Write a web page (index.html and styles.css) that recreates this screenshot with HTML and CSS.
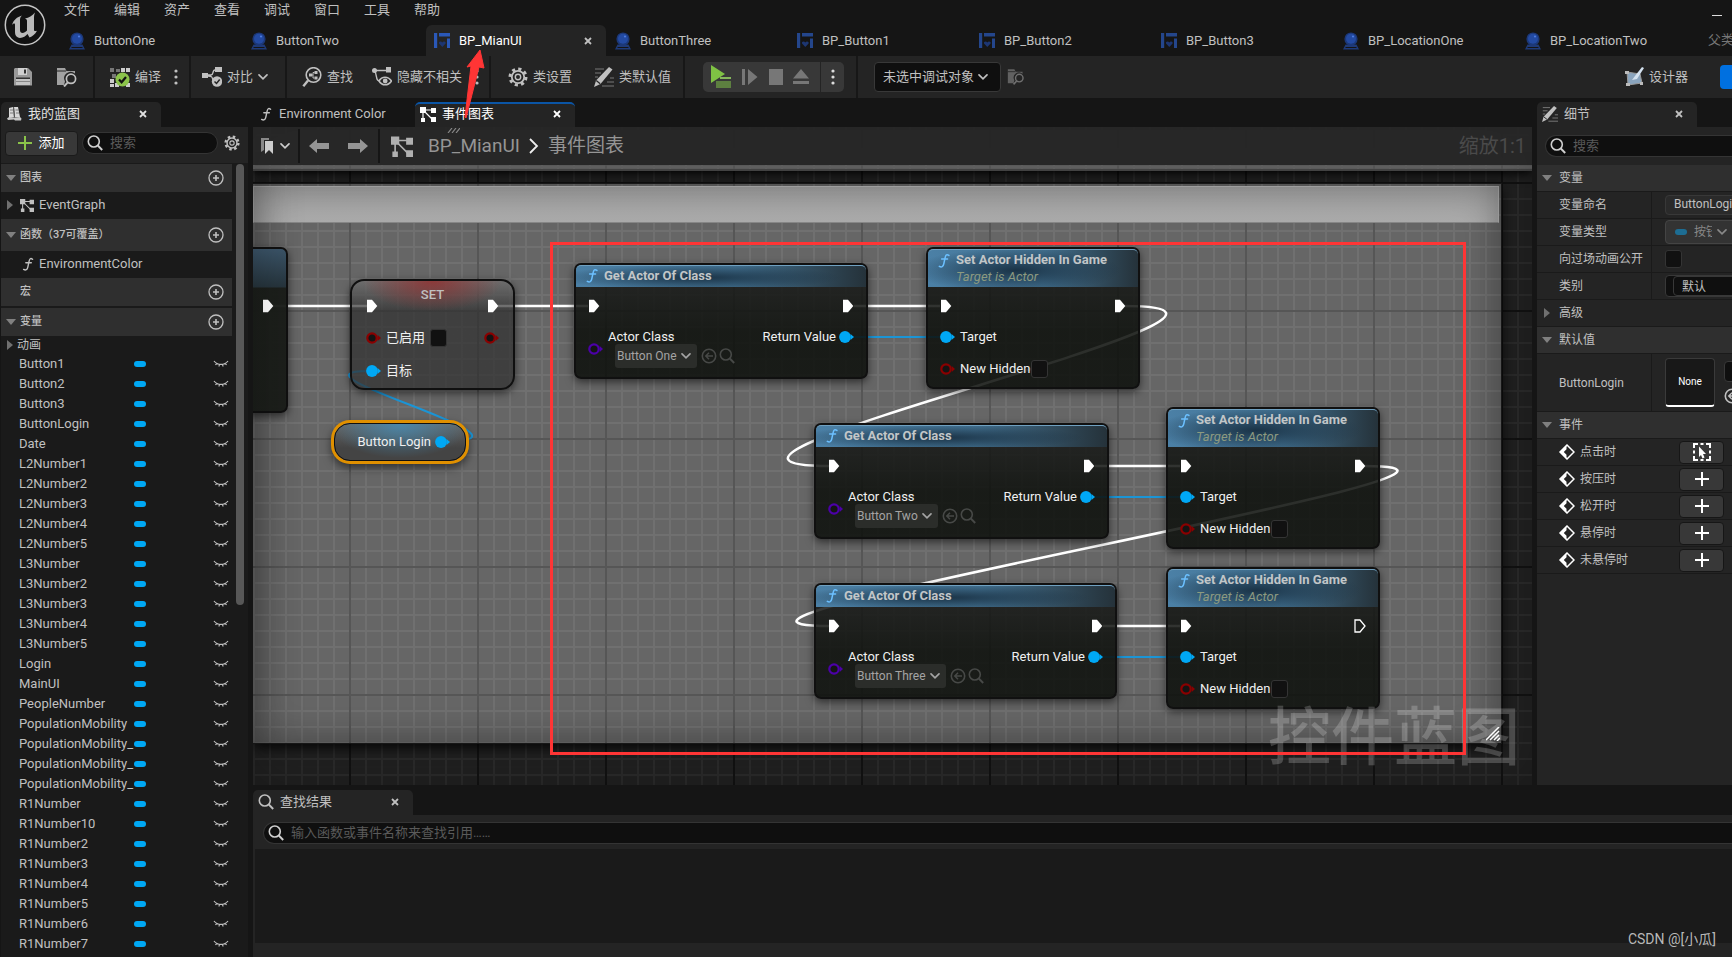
FILE: index.html
```html
<!DOCTYPE html>
<html lang="zh-CN">
<head>
<meta charset="utf-8">
<title>BP_MianUI</title>
<link rel="stylesheet" href="styles.css">
</head>
<body>
<svg class="defs" aria-hidden="true">
  <symbol id="actor" viewBox="0 0 16 18"><path d="M2.500 12.500h11L16 17.500H0z" fill="#1f3a78"/><path d="M2.500 15.500h11" stroke="#151515"/><circle cx="8" cy="7" r="6.600" fill="#1c3878"/><circle cx="8" cy="6.800" r="5" fill="#234aa2"/><circle cx="10" cy="4.500" r="1.100" fill="#4d7be0"/></symbol>
  <symbol id="widget" viewBox="0 0 16 16"><path d="M0 0h3.200v15H0zM5 0h11v3.500H5zM13 5.500h3V15h-3z" fill="currentColor"/><path d="M8.300 14 5 10.600C4.300 8.500 7 7.600 8.300 9.400c1.300-1.800 4-.9 3.300 1.200z" fill="#1d3672"/></symbol>
  <symbol id="close" viewBox="0 0 8 8"><path d="M1 1l6 6M7 1L1 7" stroke="currentColor" stroke-width="1.800"/></symbol>
  <symbol id="chev" viewBox="0 0 10 8"><path d="M1 1.800l4 4 4-4" fill="none" stroke="currentColor" stroke-width="1.700" stroke-linecap="round"/></symbol>
  <symbol id="dots" viewBox="0 0 4 16"><circle cx="2" cy="2" r="1.600" fill="currentColor"/><circle cx="2" cy="8" r="1.600" fill="currentColor"/><circle cx="2" cy="14" r="1.600" fill="currentColor"/></symbol>
  <symbol id="search" viewBox="0 0 16 16"><circle cx="6.800" cy="6.500" r="5.500" fill="none" stroke="currentColor" stroke-width="1.600"/><path d="M10.800 10.500l4.400 4.500" stroke="currentColor" stroke-width="1.900"/></symbol>
  <symbol id="save" viewBox="0 0 18 18"><path d="M1 0h13l4 4v13.500H0V1z" fill="#9a9a9a"/><path d="M4 0h9v7H4z" fill="#d0d0d0"/><path d="M10 1.500h2v4h-2z" fill="#333"/><path d="M2 9.500h14v1.500H2z" fill="#333"/><path d="M2 11h14v6H2z" fill="#c4c4c4"/><path d="M2 13.500h14" stroke="#888"/></symbol>
  <symbol id="browse" viewBox="0 0 22 19"><path d="M1 0h8l1.500 3H19v2.500A6.500 6.500 0 0 0 9 13.500L8 17H1z" fill="currentColor" opacity=".8"/><path d="M1 3h9" stroke="#242424"/><circle cx="15" cy="10.800" r="4.600" fill="none" stroke="currentColor" stroke-width="1.700"/><path d="M11.800 14.300L8 18.500" stroke="currentColor" stroke-width="2"/></symbol>
  <symbol id="compile" viewBox="0 0 20 20"><path d="M0 1h4v4H0zM2 7h4v4H2zM6 2h4v3H6z" fill="#777"/><path d="M11 1h4v4h-4zM16 1h4v4h-4zM0 12h4v4H0zM0 17h4v3H0zM5 16h4v4H5zM16 16h4v4h-4z" fill="#ccc"/><circle cx="12.500" cy="12.500" r="7" fill="#8bc34a"/><path d="M9 12.500l2.600 2.800L16 10" fill="none" stroke="#111" stroke-width="2.200"/></symbol>
  <symbol id="diff" viewBox="0 0 20 20"><path d="M0 6h6v5H0zM13 0h7v5h-7z" fill="currentColor"/><path d="M6 8h3c3 0 1-5 4-5M6 9c5 0 4 2 5 4" fill="none" stroke="currentColor" stroke-width="1.300"/><circle cx="15" cy="14.500" r="5.200" fill="currentColor"/><path d="M12.500 14.500l2 2 3.200-4" fill="none" stroke="#242424" stroke-width="1.500"/></symbol>
  <symbol id="find" viewBox="0 0 19 20"><circle cx="11" cy="8" r="7.300" fill="none" stroke="currentColor" stroke-width="1.600"/><path d="M5.500 13.500L.8 19.200" stroke="currentColor" stroke-width="2.400"/><path d="M6.500 6.500h3v3h-3zM12 4h3v3h-3zM12 9.500h3v3h-3z" fill="currentColor"/><path d="M9 8h1.500M12 5.500h-1.500V11H12" fill="none" stroke="currentColor"/></symbol>
  <symbol id="hide" viewBox="0 0 20 20"><circle cx="2.500" cy="3.500" r="2.500" fill="currentColor"/><path d="M14 0h5v5.500h-5z" fill="currentColor"/><path d="M4 3.500h10M3 4.500c2 4 1 10 4.500 9" fill="none" stroke="currentColor" stroke-width="1.400"/><path d="M7 14c3-5 9-5 12.500 0-3.500 5-9.500 5-12.500 0z" fill="none" stroke="currentColor" stroke-width="1.600"/><circle cx="13.200" cy="14" r="2.400" fill="currentColor"/></symbol>
  <symbol id="gear" viewBox="0 0 20 20"><circle cx="10" cy="10" r="8" fill="none" stroke="currentColor" stroke-width="3" stroke-dasharray="3.140 3.140"/><circle cx="10" cy="10" r="6.200" fill="none" stroke="currentColor" stroke-width="1.800"/><circle cx="10" cy="10" r="2.700" fill="none" stroke="currentColor" stroke-width="1.400"/></symbol>
  <symbol id="pencil" viewBox="0 0 20 20"><path d="M15 0l3.500 2.500L6.500 17 0 20l2-6.500z" fill="currentColor"/><path d="M2.200 13.500l4 3.200" stroke="#242424" stroke-width="1.200"/><path d="M1 2h9M1 6h6M1 10h3M16 11h4M13 15h7M8 19h12" stroke="currentColor" stroke-width="1.200" opacity=".55"/></symbol>
  <symbol id="graph" viewBox="0 0 16 16"><path d="M0 1h6v6H0zM11 2h5v5h-5zM1 12h4v4H1zM11 11h5v5h-5z" fill="currentColor"/><path d="M5 4h7M3 6v7M5 6l7 7" stroke="currentColor" stroke-width="1.200" fill="none"/></symbol>
  <symbol id="func" viewBox="0 0 12 16"><path d="M11.200 2.600C9 .8 7.800 2 7.200 5l-1.400 6.500C5.200 14.600 3.400 15.600 1 14.200M3.500 6.500h6.300" fill="none" stroke="currentColor" stroke-width="1.600" stroke-linecap="round"/></symbol>
  <symbol id="plusc" viewBox="0 0 16 16"><circle cx="8" cy="8" r="7" fill="none" stroke="currentColor" stroke-width="1.300"/><path d="M8 5v6M5 8h6" stroke="currentColor" stroke-width="1.600"/></symbol>
  <symbol id="plus" viewBox="0 0 14 14"><path d="M7 0v14M0 7h14" stroke="currentColor" stroke-width="2"/></symbol>
  <symbol id="eye" viewBox="0 0 16 8"><path d="M1 1c3.500 4.500 10.500 4.500 14 0M2.500 5l1.200-1.600M6 6.500l.4-2M10 6.500l-.4-2M13.500 5l-1.200-1.600" fill="none" stroke="currentColor" stroke-width="1.200"/></symbol>
  <symbol id="down" viewBox="0 0 10 8"><path d="M0 1h10L5 7z" fill="currentColor"/></symbol>
  <symbol id="right" viewBox="0 0 8 12"><path d="M1 1l6 5-6 5z" fill="currentColor"/></symbol>
  <symbol id="book" viewBox="0 0 16 14"><path d="M3 1l4-1 1 10-5 1zM8 0h4l2 10-5 0z" fill="#d8d8d8"/><path d="M1 11.500L3 10l5 .5 6-.5 1.500 1.500-.5 2H9l-1-1-6 .5z" fill="#c8c8c8"/><path d="M7.500 0l1 11M4 3h3M4 6h3M9.500 3h3M10 6h3" stroke="#666" stroke-width=".8"/></symbol>
  <symbol id="exec" viewBox="0 0 12 14"><path d="M1 .7h5l5.300 6.300L6 13.300H1z" fill="#fff"/></symbol>
  <symbol id="execo" viewBox="0 0 12 14"><path d="M1 1h5l5 6-5 6H1z" fill="none" stroke="#fff" stroke-width="1.300"/></symbol>
  <symbol id="pin" viewBox="0 0 15 12"><circle cx="6" cy="6" r="5.900" fill="#00a8f5"/><path d="M11.500 3L15 6l-3.500 3z" fill="#00a8f5"/></symbol>
  <symbol id="pino" viewBox="0 0 15 12"><circle cx="6" cy="6" r="4.700" fill="#141414" stroke="currentColor" stroke-width="2.200"/><path d="M11.700 3L15 6l-3.300 3z" fill="currentColor"/></symbol>
  <symbol id="back" viewBox="0 0 16 16"><circle cx="8" cy="8" r="6.700" fill="none" stroke="currentColor" stroke-width="1.600"/><path d="M12 8H5M8 4.800L4.800 8 8 11.200" fill="none" stroke="currentColor" stroke-width="1.500"/></symbol>
  <symbol id="arrow" viewBox="0 0 20 14"><path d="M8 0v4h12v6H8v4L0 7z" fill="currentColor"/></symbol>
  <symbol id="bind" viewBox="0 0 16 16"><path d="M8 1l7 7-7 7-7-7z" fill="none" stroke="#fff" stroke-width="1.500"/><path d="M7.500 1v4.300L4.800 8l2.700 2.700V15L.5 8z" fill="#fff"/></symbol>
  <symbol id="goto" viewBox="0 0 18 18"><path d="M1 5V1h4M13 1h4v4M17 13v4h-4M5 17H1v-4M7.500 1h3M7.500 17h3M1 7.500v3M17 7.500v3" fill="none" stroke="#fff" stroke-width="2"/><path d="M6 3.500l7 7.500h-3l1.500 3.500-2 1L8 12l-2 2z" fill="#fff"/></symbol>
</svg>

<header class="top">
  <svg class="logo" viewBox="0 0 42 42" aria-label="Unreal Engine"><circle cx="21" cy="21" r="19.700" fill="#111" stroke="#c4c4c4" stroke-width="1.500"/><path d="M8 21c1.500-5 5-8 10-9.500-1.500 1.500-2 2.500-2 4.500v10c0 2 1 3 2.500 3s3-1 4.500-2.500V17c0-1.500-.5-2-2-2.500 4-.8 7-2.500 10-6-.8 2-1 3.500-1 6v11c0 1.500.8 2 3 1.200C31 30.500 28.500 32 25.500 33.500L23.500 30c-2 2-4 3.800-7.500 4-3.500-.5-5-2.500-5-6.500v-6.500c0-1.800-1-2-3 0z" fill="#b9b9b9"/></svg>
  <div class="top-main">
    <nav class="menu"><button>文件</button><button>编辑</button><button>资产</button><button>查看</button><button>调试</button><button>窗口</button><button>工具</button><button>帮助</button></nav>
    <div class="tabs">
      <button class="tab"><svg class="i16"><use href="#actor"/></svg>ButtonOne</button>
      <button class="tab"><svg class="i16"><use href="#actor"/></svg>ButtonTwo</button>
      <button class="tab on"><svg class="i16 wid"><use href="#widget"/></svg>BP_MianUI<svg class="x"><use href="#close"/></svg></button>
      <button class="tab"><svg class="i16"><use href="#actor"/></svg>ButtonThree</button>
      <button class="tab"><svg class="i16 wid"><use href="#widget"/></svg>BP_Button1</button>
      <button class="tab"><svg class="i16 wid"><use href="#widget"/></svg>BP_Button2</button>
      <button class="tab"><svg class="i16 wid"><use href="#widget"/></svg>BP_Button3</button>
      <button class="tab"><svg class="i16"><use href="#actor"/></svg>BP_LocationOne</button>
      <button class="tab"><svg class="i16"><use href="#actor"/></svg>BP_LocationTwo</button>
      <span class="parent">父类</span>
    </div>
  </div>
  <button class="minimize" aria-label="最小化"></button>
</header>

<div class="toolbar">
  <div class="group g-file"><button aria-label="保存"><svg class="i18"><use href="#save"/></svg></button><button aria-label="浏览"><svg class="i22"><use href="#browse"/></svg></button></div>
  <div class="group g-compile"><button><svg class="i20"><use href="#compile"/></svg>编译</button><button aria-label="编译选项"><svg class="dots"><use href="#dots"/></svg></button></div>
  <div class="group g-diff"><button><svg class="i20"><use href="#diff"/></svg>对比<svg class="chev"><use href="#chev"/></svg></button></div>
  <div class="group g-find"><button><svg class="i20"><use href="#find"/></svg>查找</button><button class="hide"><svg class="i20"><use href="#hide"/></svg>隐藏不相关</button><button aria-label="隐藏选项"><svg class="dots"><use href="#dots"/></svg></button></div>
  <div class="group g-class"><button><svg class="i20"><use href="#gear"/></svg>类设置</button><button><svg class="i20"><use href="#pencil"/></svg>类默认值</button></div>
  <div class="group g-play">
    <div class="play">
      <button aria-label="播放"><svg width="20" height="24" viewBox="0 0 20 24"><path d="M0 0l14 9-14 9z" fill="#7fc244"/><path d="M5 16h15v7H5z" fill="#5d8040"/><path d="M9 12h11v2H9z" fill="#86b85c"/></svg></button>
      <button aria-label="步进"><svg width="16" height="16" viewBox="0 0 16 16"><path d="M0 0h3v16H0zM6 0l9.500 8L6 16z" fill="#777"/></svg></button>
      <button aria-label="停止"><svg width="14" height="16" viewBox="0 0 14 16"><path d="M0 0h14v16H0z" fill="#777"/></svg></button>
      <button aria-label="弹出"><svg width="16" height="16" viewBox="0 0 16 16"><path d="M8 0l8 9.500H0zM0 12h16v3H0z" fill="#777"/></svg></button>
      <button class="more" aria-label="播放选项"><svg class="dots"><use href="#dots"/></svg></button>
    </div>
  </div>
  <div class="debug"><div class="sel"><select aria-label="调试对象"><option>未选中调试对象</option></select><svg class="chev"><use href="#chev"/></svg></div><button class="dim" aria-label="定位"><svg class="i18"><use href="#browse"/></svg></button></div>
  <div class="mode"><button><svg width="19" height="20" viewBox="0 0 19 20"><path d="M2 5l13 2 2 9-14 2z" fill="#8aa4bd" stroke="#999"/><path d="M17 0l2 1-7 11-5 1 3-4z" fill="#d4e2f0"/><path d="M0 4h4v3H0zM1 16h4v3H1zM15 15h3v3h-3z" fill="#bbb"/></svg>设计器</button><button class="blue" aria-label="图表"></button></div>
</div>

<div class="work">
  <aside class="left">
    <div class="docktabs"><div class="dock on"><svg class="i16"><use href="#book"/></svg><span>我的蓝图</span><button aria-label="关闭"><svg class="x"><use href="#close"/></svg></button></div></div>
    <div class="ltools"><button class="add"><svg class="i14"><use href="#plus"/></svg>添加</button><label class="search"><svg class="i16"><use href="#search"/></svg><input aria-label="搜索" placeholder="搜索"></label><button aria-label="设置"><svg class="i16"><use href="#gear"/></svg></button></div>
    <div class="tree">
      <div class="list">
        <h3><svg class="tri"><use href="#down"/></svg>图表<button aria-label="添加图表"><svg class="i16"><use href="#plusc"/></svg></button></h3>
        <div class="item"><svg class="tr"><use href="#right"/></svg><svg class="i14"><use href="#graph"/></svg>EventGraph</div>
        <h3 class="tall"><svg class="tri"><use href="#down"/></svg>函数（37可覆盖）<button aria-label="添加函数"><svg class="i16"><use href="#plusc"/></svg></button></h3>
        <div class="item fn"><svg class="i12"><use href="#func"/></svg>EnvironmentColor</div>
        <h3><span class="tri"></span>宏<button aria-label="添加宏"><svg class="i16"><use href="#plusc"/></svg></button></h3>
        <h3 class="vars"><svg class="tri"><use href="#down"/></svg>变量<button aria-label="添加变量"><svg class="i16"><use href="#plusc"/></svg></button></h3>
        <div class="item anim"><svg class="tr"><use href="#right"/></svg>动画</div>
        <ul>
          <li><span>Button1</span><i></i><svg><use href="#eye"/></svg></li>
          <li><span>Button2</span><i></i><svg><use href="#eye"/></svg></li>
          <li><span>Button3</span><i></i><svg><use href="#eye"/></svg></li>
          <li><span>ButtonLogin</span><i></i><svg><use href="#eye"/></svg></li>
          <li><span>Date</span><i></i><svg><use href="#eye"/></svg></li>
          <li><span>L2Number1</span><i></i><svg><use href="#eye"/></svg></li>
          <li><span>L2Number2</span><i></i><svg><use href="#eye"/></svg></li>
          <li><span>L2Number3</span><i></i><svg><use href="#eye"/></svg></li>
          <li><span>L2Number4</span><i></i><svg><use href="#eye"/></svg></li>
          <li><span>L2Number5</span><i></i><svg><use href="#eye"/></svg></li>
          <li><span>L3Number</span><i></i><svg><use href="#eye"/></svg></li>
          <li><span>L3Number2</span><i></i><svg><use href="#eye"/></svg></li>
          <li><span>L3Number3</span><i></i><svg><use href="#eye"/></svg></li>
          <li><span>L3Number4</span><i></i><svg><use href="#eye"/></svg></li>
          <li><span>L3Number5</span><i></i><svg><use href="#eye"/></svg></li>
          <li><span>Login</span><i></i><svg><use href="#eye"/></svg></li>
          <li><span>MainUI</span><i></i><svg><use href="#eye"/></svg></li>
          <li><span>PeopleNumber</span><i></i><svg><use href="#eye"/></svg></li>
          <li><span>PopulationMobility</span><i></i><svg><use href="#eye"/></svg></li>
          <li><span>PopulationMobility_</span><i></i><svg><use href="#eye"/></svg></li>
          <li><span>PopulationMobility_</span><i></i><svg><use href="#eye"/></svg></li>
          <li><span>PopulationMobility_</span><i></i><svg><use href="#eye"/></svg></li>
          <li><span>R1Number</span><i></i><svg><use href="#eye"/></svg></li>
          <li><span>R1Number10</span><i></i><svg><use href="#eye"/></svg></li>
          <li><span>R1Number2</span><i></i><svg><use href="#eye"/></svg></li>
          <li><span>R1Number3</span><i></i><svg><use href="#eye"/></svg></li>
          <li><span>R1Number4</span><i></i><svg><use href="#eye"/></svg></li>
          <li><span>R1Number5</span><i></i><svg><use href="#eye"/></svg></li>
          <li><span>R1Number6</span><i></i><svg><use href="#eye"/></svg></li>
          <li><span>R1Number7</span><i></i><svg><use href="#eye"/></svg></li>
        </ul>
      </div>
      <div class="bar"></div>
    </div>
  </aside>

  <div class="center">
    <div class="upper">
      <main class="graphcol">
        <div class="docktabs">
          <div class="dock env"><svg class="i14"><use href="#func"/></svg><span>Environment Color</span></div>
          <div class="dock on cur"><svg class="i16"><use href="#graph"/></svg><span>事件图表</span><button aria-label="关闭"><svg class="x"><use href="#close"/></svg></button></div>
        </div>
        <div class="canvas">
          <div class="upbox"></div>
          <div class="comment"><div class="chead"></div></div>
          <svg class="wires" aria-hidden="true"><g transform="translate(-253 -127)" fill="none">
            <g stroke="#fff" stroke-width="2.600">
              <path d="M270 306H368M498 306H588M854 306H940M1095 466H1180M1103 626H1180"/>
              <path d="M1124 306C1346 306 608 466 830 466"/>
              <path d="M1364 466C1588 466 606 626 830 626"/>
            </g>
            <g stroke="#1b95d6" stroke-width="2">
              <path d="M850 337H940M1092 497H1180M1100 657H1180"/>
              <path d="M448 441C553 441 276 371 368 371"/>
            </g>
          </g></svg>

          <div class="node stub"><svg class="exec"><use href="#exec"/></svg></div>

          <div class="node set">
            <div class="ex"><svg class="exec"><use href="#exec"/></svg><b>SET</b><svg class="exec"><use href="#exec"/></svg></div>
            <div class="row bool"><svg class="pin red"><use href="#pino"/></svg><label for="c0">已启用</label><input type="checkbox" id="c0"><svg class="pin red end"><use href="#pino"/></svg></div>
            <div class="row"><svg class="pin"><use href="#pin"/></svg>目标</div>
          </div>

          <div class="node var">Button Login<svg class="pin"><use href="#pin"/></svg></div>

          <div class="node fnode n1">
            <div class="head"><svg><use href="#func"/></svg><b>Get Actor Of Class</b></div>
            <div class="ex"><svg class="exec"><use href="#exec"/></svg><svg class="exec"><use href="#exec"/></svg></div>
            <div class="gbody"><svg class="pin purple"><use href="#pino"/></svg><div class="cls"><label for="s1">Actor Class</label><div class="pick"><div class="sel"><select id="s1"><option>Button One</option></select><svg class="chev"><use href="#chev"/></svg></div><svg class="i16"><use href="#back"/></svg><svg class="i16"><use href="#search"/></svg></div></div><div class="ret">Return Value<svg class="pin"><use href="#pin"/></svg></div></div>
          </div>
          <div class="node fnode n2">
            <div class="head two"><svg><use href="#func"/></svg><b>Set Actor Hidden In Game</b><em>Target is Actor</em></div>
            <div class="ex"><svg class="exec"><use href="#exec"/></svg><svg class="exec"><use href="#exec"/></svg></div>
            <div class="row"><svg class="pin"><use href="#pin"/></svg>Target</div>
            <div class="row"><svg class="pin red"><use href="#pino"/></svg><label for="c1">New Hidden</label><input type="checkbox" id="c1"></div>
          </div>
          <div class="node fnode n3">
            <div class="head"><svg><use href="#func"/></svg><b>Get Actor Of Class</b></div>
            <div class="ex"><svg class="exec"><use href="#exec"/></svg><svg class="exec"><use href="#exec"/></svg></div>
            <div class="gbody"><svg class="pin purple"><use href="#pino"/></svg><div class="cls"><label for="s2">Actor Class</label><div class="pick"><div class="sel"><select id="s2"><option>Button Two</option></select><svg class="chev"><use href="#chev"/></svg></div><svg class="i16"><use href="#back"/></svg><svg class="i16"><use href="#search"/></svg></div></div><div class="ret">Return Value<svg class="pin"><use href="#pin"/></svg></div></div>
          </div>
          <div class="node fnode n4">
            <div class="head two"><svg><use href="#func"/></svg><b>Set Actor Hidden In Game</b><em>Target is Actor</em></div>
            <div class="ex"><svg class="exec"><use href="#exec"/></svg><svg class="exec"><use href="#exec"/></svg></div>
            <div class="row"><svg class="pin"><use href="#pin"/></svg>Target</div>
            <div class="row"><svg class="pin red"><use href="#pino"/></svg><label for="c2">New Hidden</label><input type="checkbox" id="c2"></div>
          </div>
          <div class="node fnode n5">
            <div class="head"><svg><use href="#func"/></svg><b>Get Actor Of Class</b></div>
            <div class="ex"><svg class="exec"><use href="#exec"/></svg><svg class="exec"><use href="#exec"/></svg></div>
            <div class="gbody"><svg class="pin purple"><use href="#pino"/></svg><div class="cls"><label for="s3">Actor Class</label><div class="pick"><div class="sel"><select id="s3"><option>Button Three</option></select><svg class="chev"><use href="#chev"/></svg></div><svg class="i16"><use href="#back"/></svg><svg class="i16"><use href="#search"/></svg></div></div><div class="ret">Return Value<svg class="pin"><use href="#pin"/></svg></div></div>
          </div>
          <div class="node fnode n6">
            <div class="head two"><svg><use href="#func"/></svg><b>Set Actor Hidden In Game</b><em>Target is Actor</em></div>
            <div class="ex"><svg class="exec"><use href="#exec"/></svg><svg class="exec"><use href="#execo"/></svg></div>
            <div class="row"><svg class="pin"><use href="#pin"/></svg>Target</div>
            <div class="row"><svg class="pin red"><use href="#pino"/></svg><label for="c3">New Hidden</label><input type="checkbox" id="c3"></div>
          </div>

          <div class="vignette"></div>
          <div class="kind">控件蓝图</div>
          <svg class="grip" viewBox="0 0 14 14"><path d="M0 13L13 0M4 13l9-9M8 13l5-5M11 14l3-3" stroke="#fff" stroke-width="1.500"/></svg>
          <div class="crumbs">
            <button class="bm" aria-label="书签"><svg width="12" height="16" viewBox="0 0 12 16"><path d="M0 0h8v2H3v10l-3 2z" fill="#888"/><path d="M4 3h8v13l-4-4-4 4z" fill="#ccc"/></svg><svg class="chev"><use href="#chev"/></svg></button>
            <div class="nav"><button aria-label="后退"><svg width="20" height="14"><use href="#arrow"/></svg></button><button class="fwd" aria-label="前进"><svg width="20" height="14"><use href="#arrow"/></svg></button></div>
            <svg class="big"><use href="#graph"/></svg><a href="#">BP_MianUI</a><svg class="gt" width="10" height="16" viewBox="0 0 10 16"><path d="M1 1l7 7-7 7" fill="none" stroke="#eee" stroke-width="1.800"/></svg><a href="#">事件图表</a>
            <span class="zoom">缩放1:1</span>
            <svg class="hatch" viewBox="0 0 13 5"><path d="M1 5l4-5M5 5l4-5M9 5l4-5" stroke="#888" stroke-width="1.200"/></svg>
          </div>
        </div>
      </main>

      <aside class="right">
        <div class="docktabs"><div class="dock on det"><svg class="i16"><use href="#pencil"/></svg><span>细节</span><button aria-label="关闭"><svg class="x"><use href="#close"/></svg></button></div></div>
        <div class="details">
          <label class="search"><svg class="i16"><use href="#search"/></svg><input aria-label="搜索细节" placeholder="搜索"></label>
          <h3><svg class="tri"><use href="#down"/></svg>变量</h3>
          <div class="prop"><label for="vn">变量命名</label><div><input id="vn" class="txt" value="ButtonLogin"></div></div>
          <div class="prop"><span>变量类型</span><div><button class="type"><i></i><span>按钮</span><svg class="chev"><use href="#chev"/></svg></button></div></div>
          <div class="prop"><label for="ex">向过场动画公开</label><div><input type="checkbox" id="ex"></div></div>
          <div class="prop"><label for="cat">类别</label><div><div class="combo"><input id="cat" value="默认"></div></div></div>
          <div class="adv"><svg class="tr"><use href="#right"/></svg>高级</div>
          <h3><svg class="tri"><use href="#down"/></svg>默认值</h3>
          <div class="prop def"><span>ButtonLogin</span><div><button class="thumb">None</button><div class="asset"><button class="abox" aria-label="选择资产"></button><svg class="i16"><use href="#back"/></svg></div></div></div>
          <h3><svg class="tri"><use href="#down"/></svg>事件</h3>
          <div class="event"><svg class="i16"><use href="#bind"/></svg>点击时<button aria-label="查看点击时"><svg class="i18"><use href="#goto"/></svg></button></div>
          <div class="event"><svg class="i16"><use href="#bind"/></svg>按压时<button aria-label="添加按压时"><svg class="i14"><use href="#plus"/></svg></button></div>
          <div class="event"><svg class="i16"><use href="#bind"/></svg>松开时<button aria-label="添加松开时"><svg class="i14"><use href="#plus"/></svg></button></div>
          <div class="event"><svg class="i16"><use href="#bind"/></svg>悬停时<button aria-label="添加悬停时"><svg class="i14"><use href="#plus"/></svg></button></div>
          <div class="event"><svg class="i16"><use href="#bind"/></svg>未悬停时<button aria-label="添加未悬停时"><svg class="i14"><use href="#plus"/></svg></button></div>
        </div>
      </aside>
    </div>

    <section class="results">
      <div class="docktabs"><div class="dock on"><svg class="i16"><use href="#search"/></svg><span>查找结果</span><button aria-label="关闭"><svg class="x"><use href="#close"/></svg></button></div></div>
      <div class="rbody"><label class="search"><svg class="i16"><use href="#search"/></svg><input aria-label="查找" placeholder="输入函数或事件名称来查找引用……"></label><div class="rlist"></div></div>
    </section>
  </div>
</div>

<svg class="marks" aria-hidden="true"><rect x="551.500" y="243.500" width="913" height="510" fill="none" stroke="#ff3535" stroke-width="3"/><path d="M480 50l4 18-5-1-13 51-1-1 6-51-4 1z" fill="#ff3535" stroke="#ff3535"/></svg>
<div class="sign">CSDN @[小瓜]</div>
</body>
</html>
```

FILE: styles.css
```css
* { box-sizing: border-box; }
html, body { height: 100%; }
body {
  margin: 0; display: flex; flex-direction: column; overflow: hidden; position: relative;
  background: #151515; color: #c0c0c0;
  font: 13px/16px Roboto, "Noto Sans CJK SC", sans-serif;
}
button, input, select { font: inherit; color: inherit; background: none; border: 0; padding: 0; margin: 0; outline: 0; }
button { display: flex; align-items: center; white-space: nowrap; }
svg { display: block; flex: none; }
h3, ul { margin: 0; padding: 0; list-style: none; }
a { color: inherit; text-decoration: none; }
.defs { position: absolute; width: 0; height: 0; }
.i12 { width: 12px; height: 14px; }
.i14 { width: 14px; height: 14px; }
.i16 { width: 16px; height: 16px; }
.i18 { width: 18px; height: 18px; }
.i20 { width: 20px; height: 20px; }
.i22 { width: 22px; height: 19px; }
.x { width: 8px; height: 8px; }
.dots { width: 4px; height: 16px; }
.chev { width: 10px; height: 8px; }
.tri { width: 10px; height: 8px; color: #808080; }
.tr { width: 8px; height: 12px; color: #707070; }

/* title bar */
.top { display: flex; height: 56px; flex: none; position: relative; }
.logo { width: 42px; height: 42px; margin: 4px 16px 0 4px; }
.top-main { flex: 1; min-width: 0; display: flex; flex-direction: column; justify-content: space-between; }
.menu { display: flex; gap: 24px; padding: 2px 0 0 2px; }
.tabs { display: flex; gap: 2px; height: 31px; }
.tab { flex: 0 0 180px; gap: 9px; padding: 0 14px 0 7px; border-radius: 6px 6px 0 0; }
.tab.on { background: #242424; color: #fff; padding-left: 8px; }
.tab .i16 { height: 18px; }
.tab .wid { height: 16px; }
.tab .x { margin-left: auto; color: #c0c0c0; }
.wid { color: #24468c; }
.on .wid { color: #2a58b8; }
.parent { flex: none; padding: 7px 0 0 8px; color: #777; }
.minimize { position: absolute; right: 10px; top: 15px; width: 10px; height: 1px; background: #ddd; }

/* toolbar */
.toolbar { display: flex; height: 42px; flex: none; background: #242424; overflow: hidden; }
.group { display: flex; align-items: center; border-right: 2px solid #171717; flex: none; }
.group button, .mode button { gap: 5px; }
.g-file { padding: 0 15px 0 14px; gap: 24px; }
.g-compile { padding: 0 11px 0 15px; gap: 13px; }
.g-diff { padding: 0 17px 0 11px; }
.g-find { padding: 0 10px 0 15px; gap: 13px; }
.g-find .hide { margin-left: 6px; }
.g-class { padding: 0 12px 0 17px; gap: 22px; }
.g-play { padding: 0 12px 0 18px; }
.play { display: flex; align-items: center; justify-content: space-between; width: 141px; height: 30px; padding-left: 8px; background: #383838; border-radius: 5px; }
.play .more { width: 24px; height: 30px; justify-content: center; border-left: 1px solid #242424; color: #ddd; }
.debug { display: flex; align-items: center; gap: 6px; padding-left: 16px; }
.sel { display: grid; align-items: center; }
.sel > * { grid-area: 1 / 1; }
.sel .chev { justify-self: end; pointer-events: none; }
.sel select { appearance: none; }
.debug .sel { width: 127px; height: 30px; background: #0f0f0f; border: 1px solid #383838; border-radius: 4px; padding: 0 12px 0 8px; }
.dim { color: #707070; }
.mode { margin-left: auto; display: flex; align-items: center; gap: 32px; }
.mode .blue { width: 12px; height: 24px; background: #0070e0; border-radius: 4px 0 0 4px; }

/* docking */
.work { flex: 1; min-height: 0; display: flex; gap: 5px; }
.docktabs { height: 29px; flex: none; display: flex; align-items: flex-end; }
.dock { width: 160px; height: 25px; display: flex; align-items: center; padding: 0 14px 2px 5px; gap: 6px; border-radius: 5px 5px 0 0; white-space: nowrap; }
.dock.on { background: #242424; }
.dock button { margin-left: auto; }
.search { display: flex; align-items: center; gap: 7px; height: 22px; padding-left: 4px; background: #0f0f0f; border: 1px solid #343434; border-radius: 11px; color: #d0d0d0; }
.search input { flex: 1; width: 0; min-width: 0; }
.search input::placeholder { color: #5a5a5a; opacity: 1; }

/* my blueprint */
.left { width: 248px; flex: none; padding-left: 1px; display: flex; flex-direction: column; }
.left .dock { color: #e0e0e0; }
.ltools { height: 36px; flex: none; display: flex; align-items: center; background: #242424; padding: 0 8px 4px 4px; }
.add { width: 73px; height: 25px; margin-right: 4px; justify-content: center; gap: 6px; background: #383838; border: 1px solid #1a1a1a; border-radius: 4px; color: #fff; }
.add svg { color: #8bc34a; }
.ltools .search { width: 136px; margin-right: 6px; }
.tree { flex: 1; min-height: 0; display: flex; background: #1a1a1a; padding-top: 1px; }
.list { width: 231px; overflow: hidden; }
.bar { width: 8px; height: 441px; margin-left: 4px; background: #575757; border-radius: 4px; }
h3 { display: flex; align-items: center; height: 28px; padding: 0 8px 0 5px; gap: 4px; background: #2f2f2f; font-size: 11px; font-weight: 500; white-space: nowrap; }
h3 button { margin-left: auto; }
h3.tall { height: 32px; }
h3.vars { margin-top: 2px; }
.item { display: flex; align-items: center; height: 27px; padding: 0 0 2px 5px; gap: 5px; }
.item .tr { margin-right: 1px; }
.item.fn { padding-left: 21px; }
.item.anim { height: 18px; padding-bottom: 0; gap: 2px; font-size: 12px; }
.list li { display: grid; grid-template-columns: 114px 1fr 16px; align-items: center; height: 20px; padding: 0 3px 0 18px; gap: 0 1px; }
.list li span { white-space: nowrap; }
.list li i, .type i { width: 12px; height: 6px; border-radius: 3px; background: #00a8f5; }
.list li svg { width: 16px; height: 8px; }

/* graph */
.center { flex: 1; min-width: 0; display: flex; flex-direction: column; gap: 5px; }
.upper { flex: 1; min-height: 0; display: flex; gap: 5px; }
.graphcol { flex: 1; min-width: 0; display: flex; flex-direction: column; }
.env { width: 162px; padding-left: 6px; }
.cur { border-top: 2px solid #0b55a5; padding-bottom: 4px; color: #fff; }
.canvas, .comment {
  --bg: #212121; --minor: #2b2b2b; --major: #121212; --oy: 55px;
  background-color: var(--bg);
  background-image:
    linear-gradient(90deg, var(--major) 2px, transparent 2px),
    linear-gradient(var(--major) 2px, transparent 2px),
    linear-gradient(90deg, var(--minor) 2px, transparent 2px),
    linear-gradient(var(--minor) 2px, transparent 2px);
  background-size: 128px 128px, 128px 128px, 16px 16px, 16px 16px;
  background-position: 96px 0, 0 var(--oy), 0 0, 0 var(--oy);
}
.canvas { position: relative; flex: 1; overflow: hidden; }
.upbox { position: absolute; left: 0; right: 0; top: 0; height: 44px; background: rgba(140, 140, 140, .55); border-bottom: 2px solid #444; box-shadow: 0 2px 10px #000; }
.comment { --bg: #666; --minor: #707070; --major: #565656; --oy: 126px; position: absolute; left: 0; top: 56px; width: 1249px; height: 561px; border: solid #181818; border-width: 1px 1px 1px 0; padding: 2px 2px 0 0; box-shadow: 0 4px 12px rgba(0, 0, 0, .8); }
.chead { height: 37px; background: linear-gradient(#a4a4a4, #acacac); border: 1px solid #bbb; border-bottom-color: #888; }
.comment::after { content: ""; position: absolute; inset: 0; box-shadow: inset 0 0 40px rgba(0, 0, 0, .35); }
.wires { position: absolute; left: 0; top: 0; width: 100%; height: 100%; }
.vignette { position: absolute; inset: 0; box-shadow: inset 0 0 50px rgba(0, 0, 0, .25); pointer-events: none; }
.node { position: absolute; border: 2px solid #101010; border-radius: 7px; color: #f0f0f0; background: linear-gradient(rgba(28, 29, 28, .86), rgba(13, 16, 12, .87) 60%); box-shadow: 0 3px 8px rgba(0, 0, 0, .55); white-space: nowrap; }
.exec { width: 12px; height: 14px; }
.pin { width: 15px; height: 12px; }
.red { color: #8a0000; }
.purple { color: #4c00a8; }
.stub { left: -20px; top: 120px; width: 55px; height: 166px; padding: 50px 12px 0 0; display: flex; justify-content: flex-end; background: linear-gradient(#3b5468, #26343c 38px, rgba(25, 28, 24, .96) 39px); }
.ex { display: flex; justify-content: space-between; align-items: center; height: 38px; padding: 0 12px; }
.row { display: flex; align-items: center; height: 24px; margin-bottom: 8px; padding: 0 12px; gap: 5px; }
.node input[type=checkbox], .prop input[type=checkbox] { appearance: none; width: 17px; height: 18px; background: #111; border: 1px solid #343434; border-radius: 3px; }
.row input { margin-left: -4px; }
.end { margin-left: auto; }
.set { left: 97px; top: 152px; width: 165px; height: 111px; padding-top: 6px; border-radius: 14px; background: radial-gradient(ellipse 70px 30px at 50% 0, rgba(150, 40, 40, .75), transparent), linear-gradient(rgba(110, 110, 110, .8), rgba(48, 48, 48, .72) 30px, rgba(48, 48, 48, .72)); }
.set .ex { padding: 0 14px; }
.set .ex b { align-self: flex-start; color: #c0c0c0; font-weight: 500; }
.set .row { height: 26px; margin-bottom: 7px; padding: 0 14px; }
.set .row input { margin-left: 0; }
.var { left: 81px; top: 296px; width: 132px; height: 38px; display: flex; align-items: center; justify-content: flex-end; gap: 4px; padding-right: 15px; border-width: 1px; border-radius: 16px; background: radial-gradient(ellipse 70px 34px at 50% 0, rgba(70, 140, 180, .85), transparent), linear-gradient(#666, #444 24px); box-shadow: 0 0 0 3px #e09000, 0 4px 8px 3px rgba(0, 0, 0, .5); }
.head { display: grid; grid-template-columns: 12px auto; justify-content: start; align-items: center; column-gap: 6px; height: 22px; padding: 0 0 2px 10px; border-radius: 5px 5px 0 0; border-top: 1px solid #6fa0c0; background: radial-gradient(ellipse 50% 60% at 42% 55%, rgba(22, 44, 62, .9), transparent), linear-gradient(90deg, #4b80a6, #42708f 55%, #25323a); }
.head svg { width: 12px; height: 15px; color: #6cc0ff; }
.head b { font-weight: 700; color: #c2c6c8; }
.head em { grid-column: 2; color: #8c9a80; }
.two { height: 38px; padding: 2px 0 2px 10px; }
.gbody { display: flex; padding: 4px 12px 9px; gap: 5px; align-items: center; }
.cls { display: flex; flex-direction: column; }
.cls label { line-height: 15px; }
.pick { display: flex; align-items: center; gap: 2px; padding-left: 7px; color: #474947; }
.pick .sel { height: 24px; margin-right: 2px; padding: 0 6px 0 2px; background: #2b2d2a; border-radius: 3px; font-size: 12px; color: #a4a4a4; }
.pick .sel select { padding-right: 14px; }
.ret { margin-left: auto; align-self: flex-start; display: flex; align-items: center; gap: 3px; }
.n1 { left: 321px; top: 136px; width: 294px; }
.n2 { left: 673px; top: 120px; width: 214px; }
.n3 { left: 561px; top: 296px; width: 295px; }
.n4 { left: 913px; top: 280px; width: 214px; }
.n5 { left: 561px; top: 456px; width: 303px; }
.n6 { left: 913px; top: 440px; width: 214px; }
.n2 .row:last-child, .n4 .row:last-child, .n6 .row:last-child { margin-bottom: 6px; }
.kind { position: absolute; right: 12px; bottom: 15px; font-size: 63px; line-height: 64px; font-weight: 500; color: rgba(255, 255, 255, .2); }
.grip { position: absolute; left: 1233px; top: 600px; width: 14px; height: 14px; }
.crumbs { position: absolute; left: 0; right: 0; top: 0; height: 38px; display: flex; align-items: center; padding: 0 6px 0 8px; background: rgba(36, 36, 36, .93); color: #959595; font-size: 19px; line-height: 24px; }
.bm { gap: 7px; height: 34px; padding-right: 8px; border-right: 2px solid #151515; color: #ccc; }
.nav { display: flex; align-items: center; gap: 19px; height: 34px; padding: 0 10px 0 9px; border-right: 2px solid #151515; }
.fwd { transform: scaleX(-1); }
.big { width: 22px; height: 22px; margin: 0 15px 0 11px; color: #b0b0b0; }
.gt { margin: 0 9px; }
.zoom { margin-left: auto; color: #4a4a4a; font-size: 20px; }
.hatch { position: absolute; left: 194px; top: 1px; width: 13px; height: 5px; }

/* details */
.right { width: 195px; flex: none; overflow: hidden; display: flex; flex-direction: column; }
.details { flex: 1; background: #242424; font-size: 12px; overflow: hidden; }
.details .search { margin: 8px 0 8px 8px; border-right: 0; border-radius: 11px 0 0 11px; font-size: 13px; }
.details h3 { height: 27px; gap: 7px; font-size: 12px; font-weight: 400; border-bottom: 1px solid #1a1a1a; }
.prop { display: grid; grid-template-columns: 115px 1fr; height: 27px; align-items: stretch; border-bottom: 1px solid #1a1a1a; white-space: nowrap; }
.prop > :first-child { padding-left: 22px; border-right: 1px solid #1a1a1a; display: flex; align-items: center; }
.prop > div { padding-left: 13px; display: flex; align-items: center; min-width: 0; overflow: hidden; }
.txt { width: 120px; height: 20px; flex: none; padding: 0 0 2px 8px; background: #2a2a2a; border: 1px solid #383838; border-radius: 4px; }
.type { width: 80px; height: 24px; flex: none; padding-left: 9px; background: #333; border: 1px solid #444; border-radius: 4px; color: #888; }
.type i { background: #1d6d93; }
.type span { width: 18px; margin: 0 5px 0 7px; overflow: hidden; }
.combo { flex: none; width: 90px; height: 22px; padding-left: 7px; background: #0f0f0f; border: 1px solid #383838; border-radius: 4px; }
.combo input { width: 82px; height: 20px; padding: 0 0 2px 8px; border: 1px solid #383838; border-radius: 4px; }
.adv { display: flex; align-items: center; height: 27px; padding-left: 6px; gap: 8px; border-bottom: 1px solid #1a1a1a; }
.def { height: 58px; }
.thumb { width: 50px; height: 49px; flex: none; justify-content: center; background: #181818; border: 1px solid #3a3a3a; border-bottom: 2px solid #fff; border-radius: 4px; font-size: 10px; color: #fff; }
.asset { display: flex; flex-direction: column; gap: 6px; padding-left: 9px; }
.abox { width: 40px; height: 21px; background: #0f0f0f; border: 1px solid #383838; border-radius: 4px; }
.event { display: flex; align-items: center; height: 27px; padding: 0 8px 0 22px; gap: 5px; border-bottom: 1px solid #1a1a1a; }
.event button { width: 45px; height: 23px; margin-left: auto; justify-content: center; background: #383838; border: 1px solid #161616; border-radius: 4px; color: #fff; }

/* find results */
.results { height: 167px; flex: none; display: flex; flex-direction: column; }
.results .docktabs { height: 25px; }
.rbody { flex: 1; display: flex; flex-direction: column; background: #242424; padding: 7px 0 14px 2px; }
.rbody .search { margin: 0 0 5px 8px; border-right: 0; border-radius: 11px 0 0 11px; }
.rlist { flex: 1; background: #1a1a1a; }

/* annotations */
.marks { position: absolute; left: 0; top: 0; width: 100%; height: 100%; pointer-events: none; }
.sign { position: absolute; right: 16px; bottom: 9px; font-size: 14px; line-height: 18px; color: #b8b8b8; }
```
